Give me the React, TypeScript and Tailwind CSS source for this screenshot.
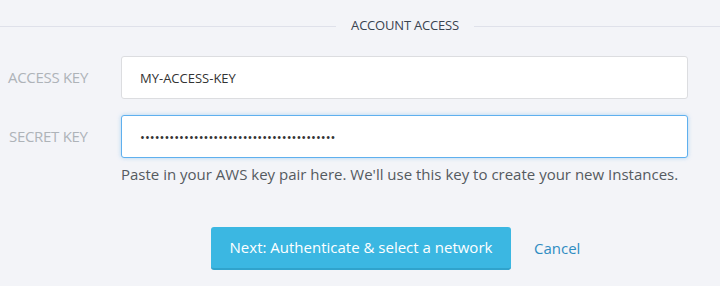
import { useState } from "react";

export default function App() {
  const [accessKey, setAccessKey] = useState("MY-ACCESS-KEY");
  const [secretKey, setSecretKey] = useState("a".repeat(40));

  return (
    <div className="w-[720px] h-[286px] bg-[#f3f4f8] font-['Open_Sans',sans-serif] overflow-hidden">
      {/* Section heading */}
      <div className="flex items-center h-[52px]">
        <div className="w-[120px] h-px bg-[#dfe1ea]" />
        <div className="w-[570px] flex items-center">
          <div className="flex-1 h-px bg-[#dfe1ea]" />
          <span className="px-[15px] text-[13px] tracking-[-0.2px] text-[#3a4350] uppercase">
            Account Access
          </span>
          <div className="flex-1 h-px bg-[#dfe1ea]" />
        </div>
        <div className="flex-1 h-px bg-[#dfe1ea]" />
      </div>

      {/* Fields */}
      <div className="flex flex-col gap-[16px] mt-[4px]">
        <div className="flex items-center">
          <label className="w-[121px] pl-[8px] text-[15px] tracking-[-0.3px] text-[#aeb3b8] uppercase">Access Key</label>
          <input
            value={accessKey}
            onChange={(e) => setAccessKey(e.target.value)}
            className="w-[567px] h-[43px] bg-white border border-[#dcdde0] rounded-[3px] px-[18px] text-[13px] text-[#333] outline-none"
          />
        </div>
        <div className="flex items-center">
          <label className="w-[121px] pl-[9px] text-[15px] tracking-[-0.3px] text-[#aeb3b8] uppercase">Secret Key</label>
          <input
            type="password"
            value={secretKey}
            onChange={(e) => setSecretKey(e.target.value)}
            className="w-[567px] h-[43px] bg-white border border-[#5fb0ee] rounded-[3px] px-[18px] text-[13px] text-[#333] outline-none shadow-[0_0_4px_rgba(95,176,238,0.45)]"
          />
        </div>
      </div>
      <p className="ml-[121px] mt-[5px] text-[15px] leading-[22px] text-[#555a60]">
        Paste in your AWS key pair here. We'll use this key to create your new Instances.
      </p>

      {/* Actions */}
      <div className="flex items-center pl-[211px] mt-[42px]">
        <button className="w-[300px] h-[43px] bg-[#3bb7e2] border-b-2 border-[#30a3cc] rounded-[3px] text-white text-[15px]">
          Next: Authenticate &amp; select a network
        </button>
        <button className="ml-[23px] text-[15px] text-[#2f8cc2]">Cancel</button>
      </div>
    </div>
  );
}
